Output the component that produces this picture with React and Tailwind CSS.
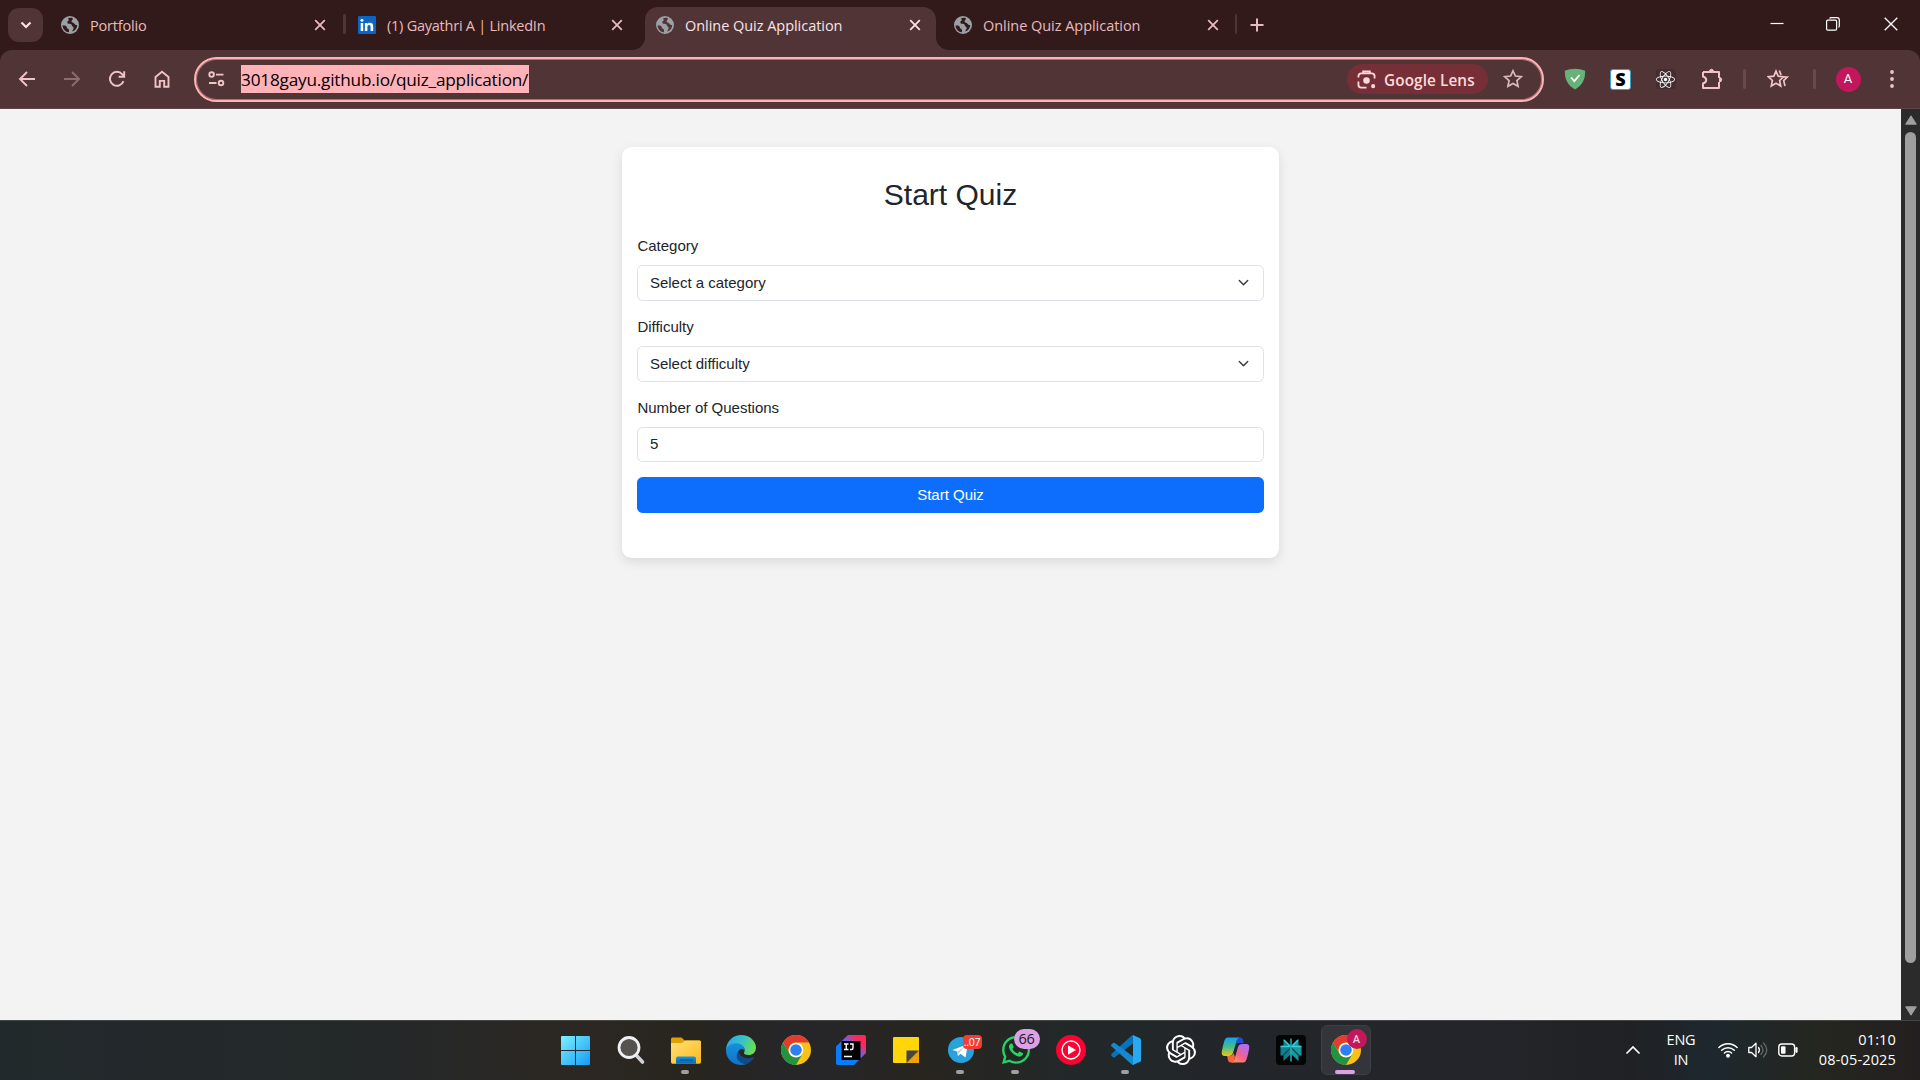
import React from "react";
import { SiOpenai } from "react-icons/si";
import { FaWhatsapp, FaReact } from "react-icons/fa";

const UI = "font-['Open_Sans','Noto_Sans',sans-serif]";

function Globe({ cut = "#321a1a" }) {
  return (
    <svg viewBox="0 0 18 18" className="size-[18px] shrink-0">
      <circle cx="9" cy="9" r="9" fill="#9aa0a6" />
      <path d="M1.600 9.200c1.500.2 3 .2 3.700 1 .9 1 .2 2 1.600 2.500 1.200.4 1.300 1.200 1 3.600C4.400 16 1.600 13 1.600 9.200zM7.300 4.800c-1.300.4-1.400 2.700.2 3 1.500.3 3.200.1 3.400 1.600.2 1.200 1.500 1 1.700 2.200.2 1.200-.7 2.700-1.700 4 3.200-1 5.300-3.500 5.300-6.700-1.600.3-2.300-.5-3-1.500-.8-1-2.600-.5-2.700-1.800-.1-1.200 1.500-1.400 1.300-3.300-1.600-.7-3.500-.5-4.900.2.900.8 1.300 1.900.4 2.300z" fill={cut} />
    </svg>
  );
}

function CloseX({ color }) {
  return (
    <svg viewBox="0 0 12 12" className="size-3 shrink-0">
      <path d="M1.200 1.200l9.600 9.600M10.800 1.200L1.200 10.800" stroke={color} strokeWidth="1.800" />
    </svg>
  );
}

function LinkedIn() {
  return (
    <svg viewBox="0 0 18 18" className="size-[18px] shrink-0">
      <rect width="18" height="18" rx="1.200" fill="#0a66c2" />
      <path d="M2.700 7h2.500v8H2.700zM6.900 7h2.400v1.100c.5-.8 1.300-1.300 2.600-1.300 2.600 0 3.300 1.600 3.300 4V15h-2.600v-3.900c0-1.100-.2-2.100-1.500-2.100s-1.700.9-1.700 2.100V15H6.900z" fill="#fff" />
      <circle cx="3.950" cy="4.200" r="1.500" fill="#fff" />
    </svg>
  );
}

function Tab({ title, icon, active, text }) {
  return (
    <div className={"relative flex h-[43px] w-[291px] shrink-0 items-center rounded-t-[13px] pb-[7px] pl-[11px] pr-[15px] " + (active ? "bg-[#503436] text-[#fbe3e4]" : "text-[#e8babd]")}>
      {active && (
        <>
          <svg viewBox="0 0 13 13" className="absolute -left-[13px] bottom-0 size-[13px]"><path d="M13 0v13H0A13 13 0 0 0 13 0z" fill="#503436" /></svg>
          <svg viewBox="0 0 13 13" className="absolute -right-[13px] bottom-0 size-[13px]"><path d="M0 0v13h13A13 13 0 0 1 0 0z" fill="#503436" /></svg>
        </>
      )}
      {icon}
      <span className={"ml-[11px] whitespace-nowrap pt-px text-[14.500px] leading-5 " + text}>{title}</span>
      <span className="ml-auto"><CloseX color={active ? "#fbe3e4" : "#e8babd"} /></span>
    </div>
  );
}

function TabStrip() {
  return (
    <div className="flex h-[50px] items-start bg-[#321a1a]">
      <div className="ml-2 mt-2 flex h-[34px] w-[35px] items-center justify-center rounded-[11px] bg-[#503436]">
        <svg viewBox="0 0 12 8" className="h-2 w-3"><path d="M1.500 1.500L6 6l4.500-4.500" fill="none" stroke="#fbe3e4" strokeWidth="2.200" /></svg>
      </div>
      <div className="ml-[7px] mt-[7px] flex">
        <Tab title="Portfolio" icon={<Globe />} text="tracking-[-0.180px]" />
        <div className="ml-0.5 mr-px mt-[7px] h-5 w-[3px] rounded bg-[#503436]" />
        <Tab title="(1) Gayathri A | LinkedIn" icon={<LinkedIn />} text="tracking-[-0.240px]" />
        <div className="w-[7px]" />
        <Tab title="Online Quiz Application" icon={<Globe cut="#503436" />} active text="tracking-[-0.040px]" />
        <div className="w-[7px]" />
        <Tab title="Online Quiz Application" icon={<Globe />} text="tracking-[-0.040px]" />
        <div className="ml-px mt-[7px] h-5 w-0.5 rounded bg-[#503436]" />
      </div>
      <svg viewBox="0 0 14 14" className="ml-[13px] mt-[18px] size-[14px]"><path d="M7 .5v13M.5 7h13" stroke="#e8babd" strokeWidth="2" /></svg>
      <div className="ml-auto mr-[22px] flex items-center pt-[17px]">
        <svg viewBox="0 0 14 14" className="mr-[42px] size-[14px]"><path d="M.5 6.500h13" stroke="#fff" strokeWidth="1.200" /></svg>
        <svg viewBox="0 0 14 14" className="mr-[44px] size-[14px]" fill="none" stroke="#fff" strokeWidth="1.200"><rect x=".6" y="3.100" width="10" height="10" rx="1.200" /><path d="M3.600 1.600Q4 .7 5 .7h6q2.300 0 2.300 2.300v6q0 1-.9 1.300" /></svg>
        <svg viewBox="0 0 14 14" className="size-[14px]"><path d="M.7.7l12.600 12.600M13.300.7L.7 13.300" stroke="#fff" strokeWidth="1.300" /></svg>
      </div>
    </div>
  );
}

function Cell({ w, children }) {
  return <div className="flex h-full shrink-0 items-center justify-center" style={{ width: w }}>{children}</div>;
}

const star = "M10 1.800l2.450 5.250 5.750.7-4.250 3.920 1.130 5.680L10 14.500l-5.080 2.850 1.130-5.680L1.800 7.750l5.750-.7z";

function Toolbar() {
  const c = "#f0c4c6";
  return (
    <div className="bg-[#321a1a]">
      <div className="flex h-[59px] items-center rounded-t-[12px] border-b border-[#5f4749] bg-[#503436]">
        <Cell w={54}><svg viewBox="0 0 18 18" className="size-[18px]" fill="none" stroke={c} strokeWidth="1.900"><path d="M17 9H2M9 2L2 9l7 7" /></svg></Cell>
        <Cell w={36}><svg viewBox="0 0 18 18" className="size-[18px]" fill="none" stroke="#8d6c6e" strokeWidth="1.900"><path d="M1 9h15M9 2l7 7-7 7" /></svg></Cell>
        <Cell w={54}><svg viewBox="0 0 18 18" className="size-[18px]" fill="none" stroke={c} strokeWidth="1.900"><path d="M15.500 11.200A7 7 0 1 1 14.300 4.300L16 6.400M16.200 1.200v5.600h-5.600" /></svg></Cell>
        <Cell w={36}><svg viewBox="0 0 18 18" className="size-[18px]" fill="none" stroke={c} strokeWidth="1.900"><path d="M2.500 7L9 1.800 15.500 7v9.800h-4.300v-5.900H6.800v5.900H2.500z" /></svg></Cell>
        <div className="ml-[14px] flex h-[45px] w-[1350px] shrink-0 items-center rounded-full border-2 border-[#ffb2b8] pl-[12px] shadow-[inset_0_0_0_1px_#a87378]">
          <svg viewBox="0 0 17 16" className="h-4 w-[17px]" fill="none" stroke={c} strokeWidth="1.900"><circle cx="3.600" cy="3.600" r="2.300" /><path d="M8 3.600h7.500M1 12h7.500" /><circle cx="13" cy="12" r="2.300" /></svg>
          <span className="ml-[16px] h-7 w-[288px] whitespace-nowrap bg-[#ffb2b8] text-[17.200px] leading-[30px] tracking-[-0.200px] text-black">3018gayu.github.io/quiz_application/</span>
          <div className="ml-auto flex h-[30px] w-[141px] items-center rounded-full bg-[#762f37] pl-[10px] text-[#ffdadb]">
            <svg viewBox="0 0 20 20" className="size-[19px]" fill="none" stroke="#ffdadb" strokeWidth="1.900"><path d="M1.500 8V6.500q0-3 3-3h11q3 0 3 3V9M1.500 12v3.500q0 3 3 3H10M6.500 3V1.500h7V3" /><circle cx="10" cy="11" r="2.500" fill="#ffdadb" /><circle cx="17" cy="17" r="1.200" fill="#ffdadb" /></svg>
            <span className="ml-[8px] whitespace-nowrap pt-0.5 text-[15.300px] font-semibold leading-5 tracking-[0.100px]">Google Lens</span>
          </div>
          <svg viewBox="0 0 20 20" className="ml-[15px] mr-[19px] size-5"><path d={star} fill="none" stroke="#dbb9bb" strokeWidth="1.700" /></svg>
        </div>
        <Cell w={62}><svg viewBox="0 0 22 22" className="size-[22px]"><path d="M11 .8c3.300 0 7.300.8 10.200 2C21.200 12 18.500 17 11 21.500 3.500 17 .8 12 .8 2.800 3.700 1.600 7.700.8 11 .8z" fill="#67b279" /><path d="M7 9.500l3.400 3.600L15.500 7" fill="none" stroke="#fff" strokeWidth="1.700" /></svg></Cell>
        <Cell w={29}><div className="flex h-[21px] w-[21px] items-center justify-center rounded-[3px] border border-[#3f9fc0] bg-white font-['Open_Sans',sans-serif] text-[18px] font-extrabold leading-none text-black">S</div></Cell>
        <Cell w={61}><div className="flex size-5 items-center justify-center rounded-sm bg-[#442d2f]"><FaReact className="size-[19px] text-white" /></div></Cell>
        <Cell w={32}><svg viewBox="0 0 22 22" className="size-[22px]" fill="none" stroke={c} strokeWidth="2" strokeLinejoin="round"><path d="M2 4h16v6M2 4v4.500c4.300 1.500 4.300 5.500 0 7V20h16v-6" /><path d="M8.500 3.500q0-2.200 2-2.200t2 2.200zM18.500 9.500q2.200 0 2.200 2.200t-2.200 2.200z" fill={c} strokeWidth="1" /></svg></Cell>
        <Cell w={32}><div className="h-5 w-[3px] rounded bg-[#6d484b]" /></Cell>
        <Cell w={36}><svg viewBox="0 0 22 20" className="h-5 w-[22px]" fill="none" stroke={c} strokeWidth="1.700"><path d="M9 2.200l2.200 5 5.400.6-4 3.700 1.100 5.500L9 14.300 4.300 17l1.100-5.500-4-3.700 5.400-.6z" /><path d="M12.300 1.500l1.800 4.300M16.300 8h4l-3.600 3.600L18 17" /></svg></Cell>
        <Cell w={36}><div className="h-5 w-[3px] rounded bg-[#6d484b]" /></Cell>
        <Cell w={32}><div className="flex size-[25px] items-center justify-center rounded-full bg-[#c2185b] font-['Roboto',sans-serif] text-[13px] text-white">A</div></Cell>
        <Cell w={56}><svg viewBox="0 0 4 18" className="h-[18px] w-1" fill={c}><circle cx="2" cy="2" r="1.900" /><circle cx="2" cy="9" r="1.900" /><circle cx="2" cy="16" r="1.900" /></svg></Cell>
      </div>
    </div>
  );
}

function SelectField({ label, value }) {
  return (
    <div className="mb-[15px]">
      <div className="mb-[7.500px] leading-[22.500px]">{label}</div>
      <div className="flex h-9 items-center rounded-[5.600px] border border-[#dee2e6] pl-[11.500px] pr-3">
        <span>{value}</span>
        <svg viewBox="0 0 16 16" className="ml-auto h-[11.250px] w-[15px]"><path d="M2 5l6 6 6-6" fill="none" stroke="#343a40" strokeWidth="2" strokeLinecap="round" strokeLinejoin="round" /></svg>
      </div>
    </div>
  );
}

function Quiz() {
  return (
    <div className="flex h-[911px]">
      <div className="flex flex-1 justify-center bg-[#f3f3f3] pt-[38px]">
        <div className="h-[411px] w-[656.250px] rounded-[9.400px] bg-white px-[15px] pt-[30px] font-['Liberation_Sans',Arial,sans-serif] text-[15px] text-[#212529] shadow-[0_4px_12px_rgba(0,0,0,0.1)]">
          <h2 className="mb-[22px] text-center text-[30px] leading-[36px]">Start Quiz</h2>
          <SelectField label="Category" value="Select a category" />
          <SelectField label="Difficulty" value="Select difficulty" />
          <div className="mb-[15px]">
            <div className="mb-[7.500px] leading-[22.500px]">Number of Questions</div>
            <div className="flex h-[35px] items-center rounded-[5.600px] border border-[#dee2e6] pl-[11.500px]">5</div>
          </div>
          <button className="flex h-9 w-full items-center justify-center rounded-[5.600px] bg-[#0d6efd] text-white">Start Quiz</button>
        </div>
      </div>
      <div className="flex w-[19px] flex-col items-center bg-[#2b2b2b] pb-1 pt-[6px]">
        <svg viewBox="0 0 12 10" className="h-[10px] w-3"><path d="M6 .8L11.300 9.200H.7z" fill="#9f9f9f" stroke="#9f9f9f" strokeLinejoin="round" /></svg>
        <div className="mt-[7px] h-[831px] w-[11px] rounded-full bg-[#9f9f9f]" />
        <svg viewBox="0 0 12 10" className="mt-auto h-[10px] w-3"><path d="M6 9.200L11.300.8H.7z" fill="#9f9f9f" stroke="#9f9f9f" strokeLinejoin="round" /></svg>
      </div>
    </div>
  );
}

function Chrome() {
  return (
    <svg viewBox="0 0 30 30" className="size-[30px]">
      <circle cx="15" cy="15" r="15" fill="#fbc116" />
      <path d="M2 7.500A15 15 0 0 1 28 7.500H15a7.500 7.500 0 0 0-6.500 11.250z" fill="#e33b2e" />
      <path d="M2 7.500l6.500 11.250A7.500 7.500 0 0 0 21.500 18.750L15 30A15 15 0 0 1 2 7.500z" fill="#229342" />
      <circle cx="15" cy="15" r="7.300" fill="#fff" />
      <circle cx="15" cy="15" r="5.800" fill="#2f7ff0" />
    </svg>
  );
}

const apps = [
  { icon: (
    <svg viewBox="0 0 29 29" className="size-[29px]"><defs><linearGradient id="win" x1="0" y1="0" x2="1" y2="1" gradientUnits="objectBoundingBox"><stop stopColor="#7df0ff" /><stop offset="1" stopColor="#149cf6" /></linearGradient></defs><path d="M1 0h13v14H0V1q0-1 1-1zM15 0h13q1 0 1 1v13H15zM0 15h14v14H1q-1 0-1-1zM15 15h14v13q0 1-1 1H15z" fill="url(#win)" /></svg>
  ) },
  { icon: (
    <svg viewBox="0 0 30 30" className="size-[30px]"><path d="M20 20l6.500 7" stroke="#cfd3da" strokeWidth="3.600" strokeLinecap="round" /><circle cx="13" cy="12.500" r="10" fill="#55534f" stroke="#eef0f3" strokeWidth="2.800" /></svg>
  ) },
  { run: true, icon: (
    <svg viewBox="0 0 30 27" className="h-[27px] w-[30px]"><defs><linearGradient id="fold" x1="0" y1="0" x2="1" y2="1"><stop stopColor="#ffe07a" /><stop offset="1" stopColor="#fbba16" /></linearGradient><linearGradient id="fb" x1="0" y1="0" x2="0" y2="1"><stop stopColor="#1796df" /><stop offset="1" stopColor="#0567b8" /></linearGradient></defs><path d="M0 6V2Q0 .5 1.500.5h8.300q1 0 1.800.9L13.500 3.500H28.500Q30 3.500 30 5v4H0z" fill="#e0a000" /><path d="M0 6h10q1.500 0 2.500-1.200 1-1.200 2.500-1.200h13.500q1.500 0 1.500 1.500v20q0 1.700-1.500 1.700h-27Q0 26.800 0 25z" fill="url(#fold)" /><path d="M5 26.800V21.500Q5 19.500 7 19.500h16q2 0 2 2v5.300z" fill="url(#fb)" /><path d="M9 23h12.500" stroke="#084a86" strokeWidth="1.200" strokeLinecap="round" /></svg>
  ) },
  { icon: (
    <svg viewBox="0 0 30 30" className="size-[30px]"><defs><linearGradient id="e1" x1="0" y1=".2" x2="1" y2=".5"><stop stopColor="#2ba8ee" /><stop offset=".5" stopColor="#35c1c9" /><stop offset="1" stopColor="#6ae04f" /></linearGradient><linearGradient id="e2" x1="0" y1="0" x2="0" y2="1"><stop stopColor="#1590df" /><stop offset="1" stopColor="#1172c5" /></linearGradient></defs><path d="M.2 13A15 15 0 0 1 15 0c9 0 15 6.500 15 12.500 0 5-3.500 7.500-7.500 7.500-3.500 0-5-1.300-4.500-2.300C20.300 14 17 9.500 11.500 9.500 6 9.500 1.500 12 0 16z" fill="url(#e1)" /><path d="M0 16C.5 11 6 7.500 11.500 8.300c5 .8 7.300 4 7 7.200-1-1.600-4-2.500-6 .5-2.500 4 0 11 8 13C11 32.500 0 26 0 16z" fill="url(#e2)" /><path d="M12.300 16.500c-4 5 0 12.500 8.200 12.500 3.300-1 6-3.500 7.400-6.300.2-.6-.2-.9-.8-.6-5.500 2.600-12.500 1-14.800-5.600z" fill="#114a8b" /></svg>
  ) },
  { icon: <Chrome /> },
  { icon: (
    <svg viewBox="0 0 30 30" className="size-[30px]"><defs><linearGradient id="ij" x1="0" y1="1" x2="1" y2="0"><stop offset=".35" stopColor="#087cfa" /><stop offset=".6" stopColor="#7f5bd0" /><stop offset=".8" stopColor="#fe2857" /></linearGradient></defs><path d="M0 11.500L12 0h16q2 0 2 2v16L18 30H2q-2 0-2-2z" fill="url(#ij)" /><path d="M5.500 6h19v19h-19z" /><path d="M8 9h4.500M10.250 9v5.500M8 14.500h4.500M14 9h3v4q0 1.500-1.500 1.500H14M8 21.500h8" fill="none" stroke="#fff" strokeWidth="1.400" /></svg>
  ) },
  { icon: (
    <svg viewBox="0 0 26 26" className="size-[26px]"><path d="M1 0h24q1 0 1 1v12.500L13.500 26H1q-1 0-1-1V1q0-1 1-1z" fill="#ffd60a" /><path d="M13.500 13.500H26L13.500 26z" fill="#454545" /><path d="M26 13.500V26H13.500z" fill="#f0a20b" /></svg>
  ) },
  { run: true, icon: (
    <div className="relative size-[26px]">
      <svg viewBox="0 0 26 26" className="size-[26px]"><circle cx="13" cy="13" r="13" fill="#2aa1dc" /><path d="M4.500 13L20 7l-2.500 13.500-5-3.800-2.500 2.400-.8-4.600z" fill="#fff" /><path d="M9.200 14.500L17 9.500l-6.200 6.700-.8 2.900z" fill="#b5cfe4" /></svg>
      <span className="absolute -top-0.5 left-[15px] flex h-[14px] w-[19px] items-center justify-center rounded-[4px] bg-[#f23c34] text-[10.500px] leading-none tracking-tight text-white">..07</span>
    </div>
  ) },
  { run: true, icon: (
    <div className="relative size-[30px]">
      <FaWhatsapp className="-m-px size-8 text-[#25d366]" />
      <span className="absolute -top-[6px] left-[13px] flex h-[20px] w-[26px] items-center justify-center rounded-full bg-[#dba0e6] text-[14.500px] leading-none tracking-tight text-[#1b1b1b]">66</span>
    </div>
  ) },
  { icon: (
    <svg viewBox="0 0 30 30" className="size-[30px]"><circle cx="15" cy="15" r="15" fill="#ff0033" /><circle cx="15" cy="15" r="9" fill="none" stroke="#fff" strokeWidth="1.400" /><path d="M12 10.200l8 4.800-8 4.800z" fill="#fff" /></svg>
  ) },
  { run: true, icon: (
    <svg viewBox="0 0 30 30" className="size-[30px]"><path d="M22 0v8.500L3.800 22.200q-.9.700-1.800 0L.4 20.600q-.7-.9 0-1.700L20.800.6Q21.400 0 22 0z" fill="#0a73b8" /><path d="M.4 11.200q-.7-.9 0-1.700L2 8q.9-.7 1.800 0L22 21.500V30q-.6 0-1.200-.6z" fill="#1588d0" /><path d="M22 0l7 3.200q1 .5 1 1.600v20.400q0 1.100-1 1.600L22 30z" fill="#2aa9f3" /></svg>
  ) },
  { icon: <SiOpenai className="size-[30px] text-white" /> },
  { icon: (
    <svg viewBox="0 0 28 26" className="h-[26px] w-[29px]"><defs><linearGradient id="c1" x1="0" y1="0" x2="0" y2="1"><stop stopColor="#1aa0f0" /><stop offset=".5" stopColor="#3fbf8f" /><stop offset="1" stopColor="#f2c512" /></linearGradient><linearGradient id="c2" x1="0" y1="1" x2=".6" y2="0"><stop stopColor="#ff9a4a" /><stop offset=".5" stopColor="#f2608e" /><stop offset="1" stopColor="#b56cf0" /></linearGradient></defs><path d="M16 .5h3q1.800 0 2.400 2L22.500 6H15l-3 9z" fill="#1e4fd0" /><path d="M6 .5h12q-2 .3-3 3.500l-3.500 12Q10.500 19 7.500 19h-4Q-.5 19 .3 14.500 1.500 8 3 3.500 4 .5 6 .5z" fill="url(#c1)" /><path d="M22 25.500H10q2-.3 3-3.500l3.500-12Q17.500 7 20.500 7h4q4 0 3.200 4.500-1.200 6.500-2.700 11-1 3-3 3z" fill="url(#c2)" /><path d="M12 25.500H9q-1.800 0-2.400-2L5.500 19H8q3 0 4-3l1.500 4z" fill="#f2693c" /></svg>
  ) },
  { icon: (
    <svg viewBox="0 0 30 30" className="size-[30px]"><rect width="30" height="30" rx="4" fill="#050505" /><path d="M15 12L7.500 4v6L4.500 11.500v9H7.500V26L15 19z" fill="#127f8b" /><path d="M15 12l7.500-8v6l3 1.500v9h-3V26L15 19z" fill="#1a97a3" /><path d="M15 12L8 5M15 12l7-7M4.500 11.500H15h10.500" stroke="#2fd0d8" strokeWidth="1.500" /><path d="M15 12.500l-8 8M15 12.500l8 8" stroke="#0a4e57" strokeWidth="1.200" /><path d="M15 3.500v23" stroke="#22b0bb" strokeWidth="1.500" /></svg>
  ) },
  { active: true, icon: (
    <div className="relative size-[30px]">
      <Chrome />
      <span className="absolute -top-[6px] left-[16px] flex size-5 items-center justify-center rounded-full bg-[#c2185b] font-['Roboto',sans-serif] text-[11px] font-medium leading-none text-[#f6cfe0]">A</span>
    </div>
  ) },
];

function Taskbar() {
  return (
    <div className="flex h-[60px] border-t border-[#454545] bg-[linear-gradient(90deg,#22292c_0%,#242829_20%,#2c2722_30%,#28251f_36%,#26262a_42%,#28251f_48%,#222829_56%,#22262b_65%,#24252a_78%,#202124_85%,#1d282e_89%,#25261f_95%,#231f20_100%)] pb-px">
      <div className="ml-[548px] flex h-full">
        {apps.map((a, i) => (
          <div key={i} className="relative flex w-[55px] items-center justify-center">
            <div className={"flex size-[50px] items-center justify-center " + (a.active ? "rounded-md border border-[#3d3f43] bg-[#33353a]" : "")}>{a.icon}</div>
            {a.run && <div className="absolute bottom-[5px] left-[23px] h-1 w-2 rounded-full bg-[#a0a0a0]" />}
            {a.active && <div className="absolute bottom-[5px] left-[17px] h-1 w-5 rounded-full bg-[#dba0e6]" />}
          </div>
        ))}
      </div>
      <div className="ml-auto flex items-center pb-px pr-[24px] text-white">
        <svg viewBox="0 0 14 8" className="mr-[26px] h-2 w-[14px]"><path d="M1 7l6-6 6 6" fill="none" stroke="#fff" strokeWidth="1.700" strokeLinecap="round" /></svg>
        <div className="mr-[22px] w-[30px] whitespace-nowrap text-center text-[14.500px] leading-5 tracking-[-0.200px]"><div>ENG</div><div>IN</div></div>
        <svg viewBox="0 0 20 16" className="mr-[10px] h-4 w-5" fill="none" stroke="#fff" strokeWidth="1.500" strokeLinecap="round"><path d="M.9 5.500a12.900 12.900 0 0 1 18.200 0M3.700 8.300a9 9 0 0 1 12.600 0M6.400 11a5.100 5.100 0 0 1 7.200 0" /><circle cx="10" cy="13.700" r="1.200" fill="#fff" /></svg>
        <svg viewBox="0 0 20 16" className="mr-[10px] h-4 w-5" fill="none" stroke="#fff" strokeWidth="1.300" strokeLinecap="round" strokeLinejoin="round"><path d="M.8 5.500h2.700L8 1.300v13.400L3.500 10.500H.8zM10.500 5.500q2 2.500 0 5" /><path d="M13 3.500q4 4.500 0 9M15.500 1q6.500 7 0 14" stroke="#666" /></svg>
        <svg viewBox="0 0 20 14" className="h-[14px] w-5" fill="none" stroke="#fff" strokeWidth="1.400"><rect x=".8" y="1" width="15.800" height="12" rx="3" /><rect x="3" y="3.300" width="4.500" height="7.400" rx="1" fill="#fff" stroke="none" /><path d="M18.500 5.200v3.600" strokeWidth="2.200" strokeLinecap="round" /></svg>
        <div className="ml-[20px] w-[78px] whitespace-nowrap text-right text-[14.500px] leading-5 tracking-[0.150px]"><div>01:10</div><div>08-05-2025</div></div>
      </div>
    </div>
  );
}

export default function App() {
  return (
    <div className={"h-[1080px] w-[1920px] overflow-hidden " + UI}>
      <TabStrip />
      <Toolbar />
      <Quiz />
      <Taskbar />
    </div>
  );
}
